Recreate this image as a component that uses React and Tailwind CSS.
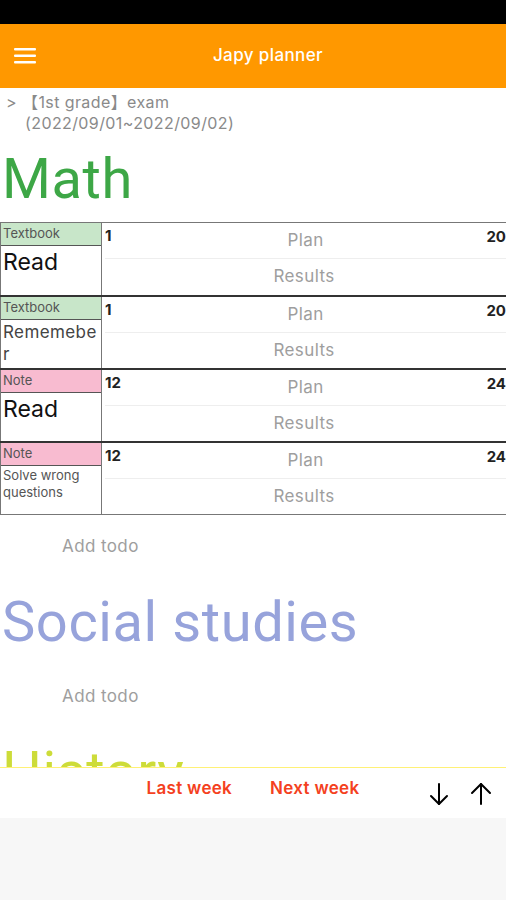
import React from "react";

const font = { fontFamily: "Inter, 'Noto Sans CJK JP', sans-serif" };
const titleFont = { fontFamily: "Roboto, sans-serif" };

const tasks = [
  { tag: "Textbook", tagBg: "bg-[#c8e6c9]", title: "Read", size: "text-[23px] leading-[30px] text-[#111]", from: "1", to: "20" },
  { tag: "Textbook", tagBg: "bg-[#c8e6c9]", title: "Rememeber", size: "text-[17px] leading-[22px] tracking-[0.4px] text-[#444]", from: "1", to: "20" },
  { tag: "Note", tagBg: "bg-[#f8bbd0]", title: "Read", size: "text-[23px] leading-[30px] text-[#111]", from: "12", to: "24" },
  { tag: "Note", tagBg: "bg-[#f8bbd0]", title: "Solve wrong questions", size: "text-[13px] leading-[17px] text-[#555]", from: "12", to: "24" },
];

function MenuIcon() {
  return (
    <svg width="24" height="18" viewBox="0 0 24 18">
      <rect x="1" y="1" width="22" height="2.5" rx="1" fill="white" />
      <rect x="1" y="7.5" width="22" height="2.5" rx="1" fill="white" />
      <rect x="1" y="14" width="22" height="2.5" rx="1" fill="white" />
    </svg>
  );
}

function Arrow({ up }) {
  return (
    <svg width="22" height="24" viewBox="0 0 22 24" fill="none" stroke="black" strokeWidth="2" strokeLinecap="round" strokeLinejoin="round">
      {up ? (
        <>
          <path d="M11 22V2" />
          <path d="M2 11l9-9 9 9" />
        </>
      ) : (
        <>
          <path d="M11 2v20" />
          <path d="M3 14l8 8 8-8" />
        </>
      )}
    </svg>
  );
}

function TaskRow({ task, first }) {
  return (
    <div className={`flex h-[73px] ${first ? "border-t border-[#777]" : "border-t-2 border-[#333]"}`}>
      {/* left column */}
      <div className="w-[102px] shrink-0 border-l border-r border-[#777] flex flex-col">
        <div className={`h-[23px] ${task.tagBg} border-b border-[#555] pl-[2px] text-[13px] leading-[20px] text-[#555]`}>
          {task.tag}
        </div>
        <div className={`pl-[2px] pt-[1px] [overflow-wrap:anywhere] ${task.size}`}>{task.title}</div>
      </div>

      {/* plan / results */}
      <div className="flex-1 flex flex-col">
        <div className="h-[36px] grid grid-cols-[1fr_auto_1fr] border-b border-[#eee] ml-[3px]">
          <span className="text-[15px] font-bold leading-[20px] pt-[3px] text-[#222]">{task.from}</span>
          <span className="text-[17px] tracking-[0.4px] text-[#9e9e9e] self-center">Plan</span>
          <span className="text-[15px] font-bold leading-[20px] pt-[4px] text-right text-[#222]">{task.to}</span>
        </div>
        <div className="h-[36px] flex items-center justify-center text-[17px] tracking-[0.4px] text-[#9e9e9e]">Results</div>
      </div>
    </div>
  );
}

function AddTodo() {
  return (
    <div className="h-16 flex items-center pl-[62px] text-[17px] tracking-[0.4px] text-[#9e9e9e]">Add todo</div>
  );
}

export default function App() {
  return (
    <div className="w-[506px] h-[900px] flex flex-col bg-[#f7f7f7] overflow-hidden" style={font}>
      <div className="h-6 bg-black shrink-0" />

      {/* header */}
      <header className="h-16 shrink-0 bg-[#ff9800] relative flex items-center">
        <div className="absolute left-[13px] top-[23px]">
          <MenuIcon />
        </div>
        <div className="w-full pl-[30px] text-center text-white text-[17px] tracking-[0.4px] font-medium">Japy planner</div>
      </header>

      {/* content */}
      <main className="h-[679px] shrink-0 overflow-hidden bg-white">
        <div className="flex pl-[6px] pt-1 pb-0.5 text-[16px] tracking-[0.4px] leading-[21px] text-[#8a8a8a]">
          <span className="w-[16px]">&gt;</span>
          <div>
            <div>【1st grade】exam</div>
            <div className="pl-[3px]">(2022/09/01~2022/09/02)</div>
          </div>
        </div>

        <h1 style={titleFont} className="h-[86px] pl-[2px] text-[56px] tracking-[0.6px] leading-[86px] text-[#3da746]">Math</h1>
        <div className="border-b border-[#777]">
          {tasks.map((t, i) => (
            <TaskRow key={i} task={t} first={i === 0} />
          ))}
        </div>
        <AddTodo />

        <h1 style={titleFont} className="h-[86px] pl-[2px] text-[56px] tracking-[0.6px] leading-[86px] text-[#97a3db]">Social studies</h1>
        <AddTodo />

        <h1 style={titleFont} className="h-[86px] pl-[2px] text-[56px] tracking-[0.6px] leading-[86px] text-[#cddc39]">History</h1>
      </main>

      {/* bottom bar */}
      <footer className="h-[51px] shrink-0 bg-white border-t border-[#fff176] grid grid-cols-[1fr_auto_1fr] items-center">
        <div />
        <div className="flex gap-[38px] pb-[8px] text-[17px] tracking-[0.3px] font-semibold text-[#f4411e]">
          <button>Last week</button>
          <button>Next week</button>
        </div>
        <div className="flex justify-end gap-[20px] pr-[14px] pt-[2px]">
          <Arrow />
          <Arrow up />
        </div>
      </footer>

      <div className="flex-1 bg-[#f7f7f7]" />
    </div>
  );
}
